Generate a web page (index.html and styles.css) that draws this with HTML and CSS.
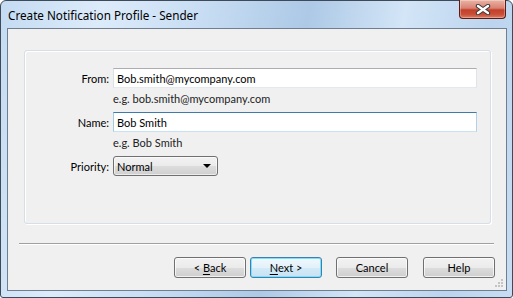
FILE: index.html
```html
<!DOCTYPE html>
<html lang="en">
<head>
    <meta charset="UTF-8">
    <title>Create Notification Profile - Sender</title>
    <link rel="stylesheet" href="styles.css">
</head>
<body>
    <div class="window">
        <!-- Title bar -->
        <div class="titlebar">
            <span class="title">Create Notification Profile - Sender</span>
            <button class="close-btn" title="Close">
                <svg width="16" height="11" viewBox="0 0 16 11">
                    <path d="M3 2 L13 9 M13 2 L3 9" stroke="#3b3b3b" stroke-width="4.4" stroke-linecap="round"/>
                    <path d="M3 2 L13 9 M13 2 L3 9" stroke="#ffffff" stroke-width="2.4" stroke-linecap="round"/>
                </svg>
            </button>
        </div>

        <!-- Client area -->
        <div class="client">
            <div class="group">
                <form class="sender-form">
                    <label for="from" class="lbl">From:</label>
                    <input type="text" id="from" class="boxy" value="Bob.smith@mycompany.com">
                    <span class="hint">e.g. bob.smith@mycompany.com</span>

                    <label for="name" class="lbl">Name:</label>
                    <input type="text" id="name" class="boxy focused" value="Bob Smith">
                    <span class="hint">e.g. Bob Smith</span>

                    <label for="priority" class="lbl">Priority:</label>
                    <div class="select" id="priority">
                        <span>Normal</span>
                        <span class="arrow"></span>
                    </div>
                </form>
            </div>

            <div class="separator"></div>

            <div class="buttons">
                <button class="btn">&lt; <u>B</u>ack</button>
                <button class="btn default"><u>N</u>ext &gt;</button>
                <button class="btn cancel">Cancel</button>
                <button class="btn">Help</button>
            </div>

            <svg class="grip" width="10" height="10" viewBox="0 0 10 10">
                <rect x="7" y="1" width="2" height="2" fill="#c4c4c4"/>
                <rect x="4" y="4" width="2" height="2" fill="#c4c4c4"/>
                <rect x="7" y="4" width="2" height="2" fill="#c4c4c4"/>
                <rect x="1" y="7" width="2" height="2" fill="#c4c4c4"/>
                <rect x="4" y="7" width="2" height="2" fill="#c4c4c4"/>
                <rect x="7" y="7" width="2" height="2" fill="#c4c4c4"/>
            </svg>
        </div>
    </div>
</body>
</html>
```

FILE: styles.css
```css
* { box-sizing: border-box; }
body { margin: 0; background: #ffffff; font-family: Lato, "Noto Sans", sans-serif; font-size: 11px; color: #000; }

.window {
    width: 513px; height: 298px;
    display: flex; flex-direction: column;
    border: 1px solid #3e4a57; border-radius: 6px 6px 3px 3px;
    background: linear-gradient(100deg, #c4dbf2 0%, #dcebfa 18%, #c9def4 35%, #adc9e6 55%, #d3e5f7 72%, #bcd4ee 88%, #c8ddf3 100%);
}

.titlebar { height: 27px; display: flex; justify-content: space-between; align-items: flex-start; }
.title { padding: 6px 0 0 7px; font-family: "Noto Sans", sans-serif; font-size: 11.7px; color: #000; }

.close-btn {
    width: 47px; height: 19px; margin: -1px 6px 0 0; padding: 0;
    display: flex; align-items: center; justify-content: center;
    border: 1px solid #5a1b14; border-top: none; border-radius: 0 0 4px 4px;
    background: linear-gradient(#eab3a5 0%, #d98272 45%, #c3402b 55%, #c94f38 80%, #dc7c63 100%);
    box-shadow: inset 0 0 0 1px rgba(255, 255, 255, 0.3);
}

.client {
    flex: 1; position: relative;
    margin: 0 5px 6px 6px;
    border: 1px solid #6f7f90;
    background: #f0f0f0;
    display: flex; flex-direction: column;
}

.group {
    margin: 21px 15px 0 16px; height: 174px;
    border: 1px solid #d5dfe5; border-radius: 3px;
    box-shadow: inset 1px 1px 0 #ffffff, 1px 1px 0 #ffffff;
    padding-top: 17px;
}

.sender-form { display: grid; grid-template-columns: 84px 364px; column-gap: 4px; }
.lbl { text-align: right; align-self: center; color: #000; }
.hint { grid-column: 2; padding: 3px 0 0 0; height: 24px; line-height: 16px; color: #222; }

.boxy {
    height: 20px; width: 364px; padding: 0 3px;
    font: inherit; color: #000; background: #fff;
    border: 1px solid; border-color: #abadb3 #e2e3ea #e3e9ef #dbdfe6;
}
.boxy.focused { border-color: #3d7bad #b5cfe7 #c7e2f1 #a4c9e3; }

.select {
    width: 105px; height: 20px; padding: 0 4px 0 3px;
    display: flex; align-items: center; justify-content: space-between;
    border: 1px solid #707070; border-radius: 3px;
    background: linear-gradient(#f2f2f2 0%, #ebebeb 50%, #dddddd 51%, #cfcfcf 100%);
    box-shadow: inset 0 0 0 1px rgba(255, 255, 255, 0.6);
}
.arrow { width: 0; height: 0; border-left: 4px solid transparent; border-right: 4px solid transparent; border-top: 4px solid #000; margin-right: 2px; }

.separator { margin: 19px 12px 0 11px; height: 2px; border-top: 1px solid #a0a0a0; border-bottom: 1px solid #ffffff; }

.buttons { display: flex; justify-content: flex-end; margin: 12px 11px 0 0; }
.btn {
    width: 72px; height: 21px; margin-left: 4px; padding: 0;
    font: inherit; color: #000;
    border: 1px solid #707070; border-radius: 3px;
    background: linear-gradient(#f2f2f2 0%, #ebebeb 50%, #dddddd 51%, #cfcfcf 100%);
    box-shadow: inset 0 0 0 1px rgba(255, 255, 255, 0.7);
}
.btn u { text-decoration-thickness: 1px; text-underline-offset: 2px; }
.btn.default {
    border-color: #3c7fb1;
    box-shadow: inset 0 0 0 1px #7ce0f7;
    background: linear-gradient(#f0f8fd 0%, #e3f1fa 50%, #d3eaf7 51%, #c8e2f3 100%);
}
.btn.cancel { margin-left: 14px; }
.btn.cancel + .btn { margin-left: 15px; }

.grip { position: absolute; right: 2px; bottom: 2px; }
```
